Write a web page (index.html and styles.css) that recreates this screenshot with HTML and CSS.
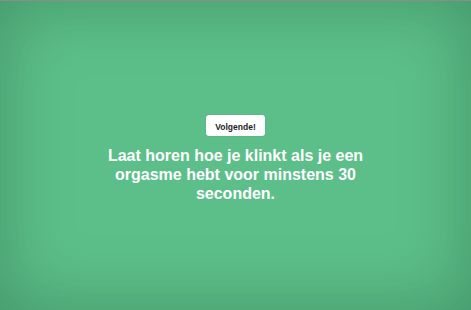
FILE: index.html
```html
<!DOCTYPE html>
<html lang="nl">
<head>
<meta charset="utf-8">
<title>Volgende</title>
<link rel="stylesheet" href="styles.css">
</head>
<body>
<main class="stage">
  <div class="content">
    <button class="next-btn" type="button">Volgende!</button>
    <p class="prompt">Laat horen hoe je klinkt als je een orgasme hebt voor minstens 30 seconden.</p>
  </div>
</main>
</body>
</html>
```

FILE: styles.css
```css
html, body {
  margin: 0;
  padding: 0;
  height: 100%;
}
body {
  font-family: "Liberation Sans", Arial, Helvetica, sans-serif;
  background: #5bbe88;
}
.stage {
  box-sizing: border-box;
  height: 100%;
  border-top: 1px solid #8c8c8c;
  background: #5cbf89;
  box-shadow: inset 0 0 70px rgba(0, 40, 20, 0.28);
  display: flex;
  justify-content: center;
  align-items: flex-start;
  padding-top: 114px;
}
.content {
  display: flex;
  flex-direction: column;
  align-items: center;
  gap: 10px;
  width: 290px;
}
.next-btn {
  font-family: "Liberation Sans", Arial, Helvetica, sans-serif;
  font-size: 8.5px;
  font-weight: bold;
  color: #1e1e1e;
  background: #ffffff;
  border: none;
  border-radius: 3px;
  width: 59px;
  height: 21px;
  padding: 2px 0 0 0;
  box-shadow: 0 0 1px rgba(0, 0, 0, 0.25);
}
.prompt {
  margin: 0;
  color: #ffffff;
  font-size: 16px;
  font-weight: bold;
  line-height: 19px;
  text-align: center;
}
```
